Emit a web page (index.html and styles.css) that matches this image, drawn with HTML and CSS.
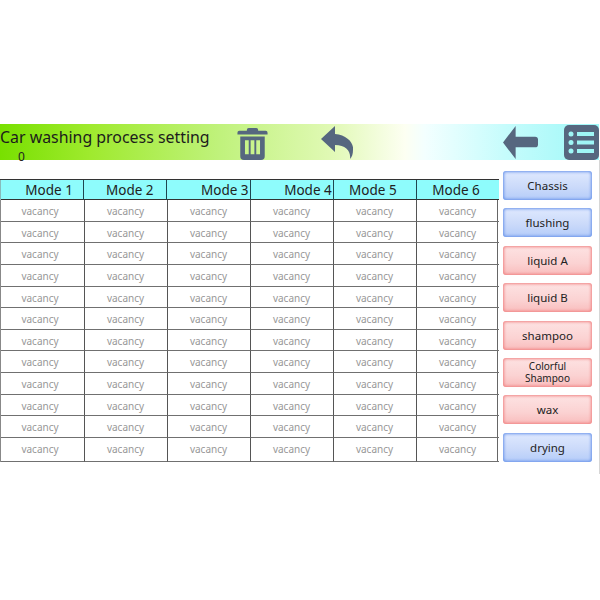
FILE: index.html
```html
<!DOCTYPE html>
<html lang="en">
<head>
<meta charset="utf-8">
<title>Car washing process setting</title>
<link rel="stylesheet" href="styles.css">
</head>
<body>
<div class="screen">
  <header class="topbar">
    <h1 class="title">Car washing process setting</h1>
    <span class="counter">0</span>
    <svg class="icon trash" viewBox="0 0 32 34" aria-hidden="true">
      <path class="fill" d="M12 0h8a2 2 0 0 1 2 2v1h8a2 2 0 0 1 2 2v2H0V5a2 2 0 0 1 2-2h8V2a2 2 0 0 1 2-2z"/>
      <path class="fill" fill-rule="evenodd" d="M3 9h26v21a4 4 0 0 1-4 4H7a4 4 0 0 1-4-4zM8 13v15h4V13zM14 13v15h4V13zM20 13v15h4V13z"/>
    </svg>
    <svg class="icon undo" viewBox="0 0 32 33" aria-hidden="true">
      <path class="fill" d="M14 0v8C26 9 33 17 32 24c0 4-1 7-3 9 1-8-4-14-15-14v7L0 13z"/>
    </svg>
    <svg class="icon back" viewBox="0 0 36 34" aria-hidden="true">
      <path class="fill" d="M13 0v11h20a3 3 0 0 1 3 3v5a3 3 0 0 1-3 3H13v12L0 17z"/>
    </svg>
    <svg class="icon menu" viewBox="0 0 35 35" aria-hidden="true">
      <rect class="fill" width="35" height="35" rx="5"/>
      <circle class="cut" cx="7" cy="9" r="2.5"/>
      <circle class="cut" cx="7" cy="17.5" r="2.5"/>
      <circle class="cut" cx="7" cy="26" r="2.5"/>
      <rect class="cut" x="13" y="7" width="17" height="4"/>
      <rect class="cut" x="13" y="15.5" width="17" height="4"/>
      <rect class="cut" x="13" y="24" width="17" height="4"/>
    </svg>
  </header>
  <main class="content">
    <div class="grid-wrap">
      <div class="heads">
        <div class="head head-a">Mode 1</div>
        <div class="head head-b">Mode 2</div>
        <div class="head head-end">Mode 3</div>
        <div class="head head-end">Mode 4</div>
        <div class="head">Mode 5</div>
        <div class="head">Mode 6</div>
      </div>
      <div class="cells" id="cells"></div>
    </div>
    <aside class="steps">
      <button class="step blue">Chassis</button>
      <button class="step blue">flushing</button>
      <button class="step red">liquid A</button>
      <button class="step red">liquid B</button>
      <button class="step red">shampoo</button>
      <button class="step red small">Colorful<br>Shampoo</button>
      <button class="step red">wax</button>
      <button class="step blue">drying</button>
    </aside>
  </main>
</div>
<script src="app.js"></script>
</body>
</html>
```
FILE: styles.css
```css
* { box-sizing: border-box; }
html, body { margin: 0; background: #fff; }
body { font-family: "Noto Sans", "Open Sans", sans-serif; color: #222; }
.screen {
  width: 600px;
  height: 600px;
  padding-top: 124px;
}
.topbar {
  position: relative;
  display: flex;
  align-items: center;
  height: 36px;
  width: 599px;
  background: linear-gradient(90deg, #78e000 0, #9fea2e 90px, #c0f27c 220px, #e0f9b4 330px, #fdfff2 405px, #f3ffff 425px, #c6fcfc 505px, #9ef8f8 599px);
}
.title {
  margin: 0;
  font-size: 15.9px;
  font-weight: 400;
  line-height: 26px;
  color: #1c1c1c;
  white-space: nowrap;
  width: 237px;
  align-self: flex-start;
}
.counter {
  position: absolute;
  left: 18px;
  top: 26px;
  font-size: 12px;
  line-height: 14px;
  color: #222;
}
.icon { display: block; flex: none; }
.fill { fill: #56677f; }
.cut { fill: #9ff6f6; }
.trash { width: 31px; height: 32px; margin-top: 3px; }
.undo { width: 32px; height: 33px; margin-left: 53px; margin-top: 1px; }
.back { width: 35px; height: 35px; margin-left: 150px; }
.menu { width: 35px; height: 35px; margin-left: 26px; }
.content {
  display: flex;
  align-items: flex-start;
  height: 314px;
  border-right: 1px solid #d6d6d6;
}
.grid-wrap { width: 499px; margin-top: 19px; }
.heads {
  display: grid;
  grid-template-columns: repeat(6, 83.2px);
  height: 21px;
  border-top: 1px solid #333;
  border-bottom: 1px solid #333;
  background: #8efcfc;
}
.head {
  font-size: 13.5px;
  line-height: 20px;
  text-align: center;
  color: #222;
  border-left: 1px solid #1f4650;
  padding-right: 4px;
}
.head:first-child { border-left-color: #8bb; }
.head-a { padding-left: 14px; padding-right: 0; }
.head-b { padding-left: 9px; padding-right: 0; }
.head-end { text-align: right; padding-right: 1px; }
.cells {
  display: grid;
  grid-template-columns: repeat(6, 83px);
  grid-template-rows: repeat(11, 21.65px) 23.85px;
  width: 498px;
  border-left: 1px solid #888;
  border-right: 1px solid #666;
}
.cell {
  font-size: 10px;
  line-height: 23px;
  text-align: center;
  color: #979797;
  border-bottom: 1px solid #707070;
  border-left: 1px solid #555;
  padding-right: 1px;
}
.cell:nth-child(6n+1) { border-left: 0; padding-right: 5px; }
.steps {
  display: flex;
  flex-direction: column;
  gap: 8.4px;
  width: 89px;
  margin: 11px 0 0 4px;
}
.step {
  display: block;
  width: 89px;
  height: 29px;
  padding: 0;
  border: 0;
  border-radius: 3px;
  font-family: inherit;
  font-size: 11.5px;
  line-height: 13px;
  color: #222;
}
.step.small { font-size: 10px; line-height: 12.5px; }
.blue {
  background: linear-gradient(180deg, #dfe9fe 0, #cbdafa 55%, #b4ccf9 100%);
  box-shadow: inset 0 0 3px 1px #6a94ea;
}
.red {
  background: linear-gradient(180deg, #fde3e3 0, #fbd2d2 60%, #f9bcbc 100%);
  box-shadow: inset 0 0 3px 1px #f08484;
}
```
FILE: app.js
```js
var cells = document.getElementById("cells");
for (var i = 0; i < 72; i++) {
  var d = document.createElement("div");
  d.className = "cell";
  d.textContent = "vacancy";
  cells.appendChild(d);
}
```
